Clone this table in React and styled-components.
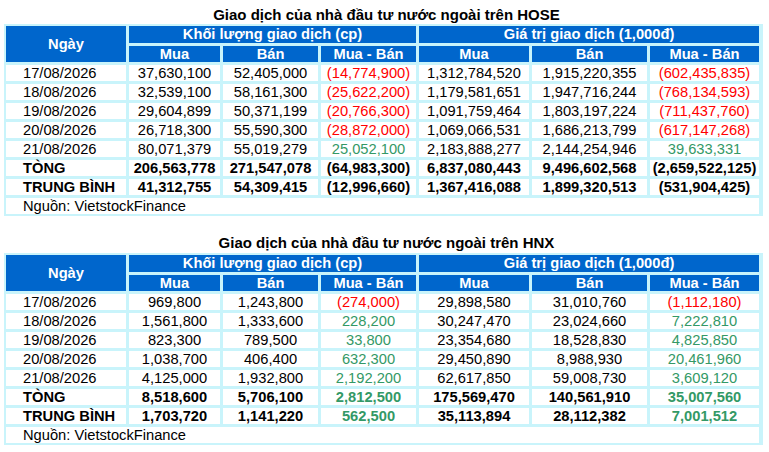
import React from "react";
import styled, { createGlobalStyle } from "styled-components";

const Global = createGlobalStyle`
  html, body { margin: 0; padding: 0; background: #ffffff; }
  body { font-family: "Liberation Sans", Arial, sans-serif; }
`;

const Page = styled.div`
  width: 769px;
  height: 452px;
  display: flex;
  flex-direction: column;
  overflow: hidden;
`;

const Title = styled.div`
  display: flex;
  justify-content: center;
  padding-left: 4px;
  padding-top: ${(p) => p.$pt}px;
  padding-bottom: ${(p) => p.$pb}px;
  height: 16px;
  line-height: 16px;
  font-size: 15px;
  font-weight: bold;
  color: #000;
  white-space: nowrap;
`;

const Grid = styled.div`
  margin-left: 4px;
  width: 753px;
  display: grid;
  grid-template-columns: 120px 91px 95px 95px 110px 115px 109px;
  grid-template-rows: 17px 16px repeat(8, 16px);
  gap: 3px;
  padding: 2px 4px 2px 2px;
  background: #c9f4fb;
`;

const Head = styled.div`
  background: #0066cc;
  color: #ffffff;
  font-weight: bold;
  font-size: 14.7px;
  display: flex;
  align-items: center;
  justify-content: center;
  line-height: 1;
  white-space: nowrap;
  grid-row: ${(p) => (p.$rows ? `span ${p.$rows}` : "auto")};
  grid-column: ${(p) => (p.$cols ? `span ${p.$cols}` : "auto")};
`;

const Cell = styled.div`
  background: #ffffff;
  font-size: 14.7px;
  line-height: 1;
  display: flex;
  align-items: center;
  justify-content: ${(p) => (p.$left ? "flex-start" : "center")};
  padding-left: ${(p) => (p.$left ? "17px" : "0")};
  font-weight: ${(p) => (p.$bold ? "bold" : "normal")};
  color: ${(p) => p.$color || "#000000"};
  white-space: nowrap;
`;

const Source = styled(Cell)`
  grid-column: span 7;
`;

const RED = "#ff0000";
const GREEN = "#339966";

const hose = [
  ["17/08/2026", "37,630,100", "52,405,000", "(14,774,900)", "1,312,784,520", "1,915,220,355", "(602,435,835)"],
  ["18/08/2026", "32,539,100", "58,161,300", "(25,622,200)", "1,179,581,651", "1,947,716,244", "(768,134,593)"],
  ["19/08/2026", "29,604,899", "50,371,199", "(20,766,300)", "1,091,759,464", "1,803,197,224", "(711,437,760)"],
  ["20/08/2026", "26,718,300", "55,590,300", "(28,872,000)", "1,069,066,531", "1,686,213,799", "(617,147,268)"],
  ["21/08/2026", "80,071,379", "55,019,279", "25,052,100", "2,183,888,277", "2,144,254,946", "39,633,331"],
  ["TÒNG", "206,563,778", "271,547,078", "(64,983,300)", "6,837,080,443", "9,496,602,568", "(2,659,522,125)", true],
  ["TRUNG BÌNH", "41,312,755", "54,309,415", "(12,996,660)", "1,367,416,088", "1,899,320,513", "(531,904,425)", true],
];

const hnx = [
  ["17/08/2026", "969,800", "1,243,800", "(274,000)", "29,898,580", "31,010,760", "(1,112,180)"],
  ["18/08/2026", "1,561,800", "1,333,600", "228,200", "30,247,470", "23,024,660", "7,222,810"],
  ["19/08/2026", "823,300", "789,500", "33,800", "23,354,680", "18,528,830", "4,825,850"],
  ["20/08/2026", "1,038,700", "406,400", "632,300", "29,450,890", "8,988,930", "20,461,960"],
  ["21/08/2026", "4,125,000", "1,932,800", "2,192,200", "62,617,850", "59,008,730", "3,609,120"],
  ["TÒNG", "8,518,600", "5,706,100", "2,812,500", "175,569,470", "140,561,910", "35,007,560", true],
  ["TRUNG BÌNH", "1,703,720", "1,141,220", "562,500", "35,113,894", "28,112,382", "7,001,512", true],
];

function diffColor(v, bold) {
  const neg = v.startsWith("(");
  if (neg) return bold ? "#000000" : RED;
  return GREEN;
}

function ForeignTable({ rows }) {
  return (
    <Grid>
      <Head $rows={2}>Ngày</Head>
      <Head $cols={3}>Khối lượng giao dịch (cp)</Head>
      <Head $cols={3}>Giá trị giao dịch (1,000đ)</Head>
      <Head>Mua</Head>
      <Head>Bán</Head>
      <Head>Mua - Bán</Head>
      <Head>Mua</Head>
      <Head>Bán</Head>
      <Head>Mua - Bán</Head>
      {rows.map((r) => {
        const bold = !!r[7];
        return (
          <React.Fragment key={r[0]}>
            <Cell $left $bold={bold}>{r[0]}</Cell>
            <Cell $bold={bold}>{r[1]}</Cell>
            <Cell $bold={bold}>{r[2]}</Cell>
            <Cell $bold={bold} $color={diffColor(r[3], bold)}>{r[3]}</Cell>
            <Cell $bold={bold}>{r[4]}</Cell>
            <Cell $bold={bold}>{r[5]}</Cell>
            <Cell $bold={bold} $color={diffColor(r[6], bold)}>{r[6]}</Cell>
          </React.Fragment>
        );
      })}
      <Source $left>Nguồn: VietstockFinance</Source>
    </Grid>
  );
}

export default function App() {
  return (
    <Page>
      <Global />
      <Title $pt={7} $pb={1}>Giao dịch của nhà đầu tư nước ngoài trên HOSE</Title>
      <ForeignTable rows={hose} />
      <Title $pt={19} $pb={2}>Giao dịch của nhà đầu tư nước ngoài trên HNX</Title>
      <ForeignTable rows={hnx} />
    </Page>
  );
}
